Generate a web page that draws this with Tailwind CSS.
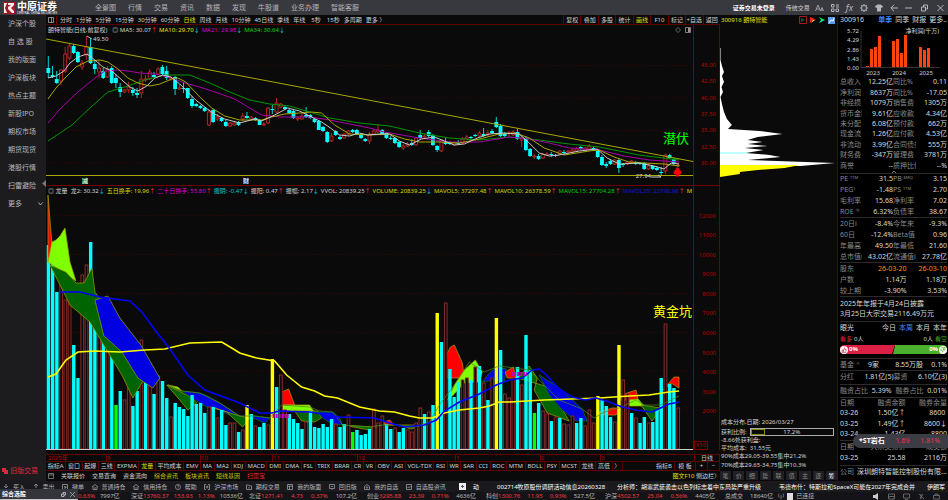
<!DOCTYPE html>
<html lang="zh-CN">
<head>
    <meta charset="UTF-8">
    <meta name="viewport" content="width=device-width, initial-scale=1.0">
    <title>中原证券 - 朗特智能 300916</title>
    <script src="https://cdn.jsdelivr.net/npm/@tailwindcss/browser@4"></script>
</head>
<body class="bg-[#0a0a0a] font-['Noto_Sans','Noto_Sans_CJK_SC',sans-serif] text-[6px] leading-[8px] text-[#d2d2d2] whitespace-nowrap overflow-hidden">
<div class="min-h-screen flex flex-col">

    <!-- Top bar -->
    <header class="h-[15px] shrink-0 bg-[#38383f] flex items-center text-[7px] text-[#b4b4ba]">
        <div class="w-[95px] pl-[3px] flex items-center gap-[2px]">
            <svg class="w-3 h-3" viewBox="0 0 12 12"><rect width="12" height="12" fill="#a31a26"/><path d="M1 11V1h3L2 6l2 5zM5 1h6v2L8 6l3 3v2H9L5 7V5l3-2H5z" fill="#eee"/></svg>
            <div class="text-white">
                <div class="text-[10px] leading-[10px] font-bold">中原证券</div>
                <div class="text-[3px] leading-[4px]">CENTRAL CHINA SECURITIES</div>
            </div>
        </div>
        <nav class="flex gap-3">
            <a href="#">全景图</a><a href="#">行情</a><a href="#">交易</a><a href="#">资讯</a><a href="#">数据</a><a href="#">发现</a><a href="#">牛股道</a><a href="#">业务办理</a><a href="#">智能客服</a>
        </nav>
        <div class="ml-auto flex items-center gap-[9px] pr-1 text-[6px]">
            <button class="font-bold text-white mr-[2px]">证券交易未登录</button>
            <button class="text-[#d0d0d4]">传统交易</button>
            <svg class="w-[9px] h-2 -ml-1" viewBox="0 0 9 8" fill="none" stroke="#b4b4ba" stroke-width=".8"><path d="M.5 7 3 1l2.500 6M1.500 5h3M5.500 7 7 3.500 8.500 7M6 6h2"/></svg>
            <svg class="w-2 h-2 -ml-[2px]" viewBox="0 0 8 8" fill="none" stroke="#b4b4ba"><path d="M.5.5h2.500v2.500H.5zM5 1h3M5 3h3M.5 5h2.500v2.500H.5zM5 5h2.500v2.500H5z"/></svg>
            <span class="italic text-[9px] -ml-[2px]">fx</span>
            <svg class="w-2 h-2 -ml-[2px]" viewBox="0 0 8 8" fill="none" stroke="#b4b4ba"><circle cx="4" cy="4" r="2.400"/><path d="M4 0v1.500M4 6.500V8M0 4h1.500M6.500 4H8M1.200 1.200l1 1M5.800 5.800l1 1M1.200 6.800l1-1M5.800 2.200l1-1" stroke-width="1.200"/></svg>
            <svg class="w-2 h-2 -ml-[2px]" viewBox="0 0 8 8" fill="#b4b4ba"><path d="M2.500.5h3L8 2.200 7 4l-1-.5v4H2v-4L1 4 0 2.200z"/></svg>
            <svg class="w-2 h-2 -ml-[2px]" viewBox="0 0 8 8" fill="none" stroke="#b4b4ba"><path d="M8 4H1M4 .8.8 4 4 7.200"/></svg>
            <svg class="w-[7px] h-2 -ml-[2px]" viewBox="0 0 7 8" fill="none" stroke="#b4b4ba"><path d="M0 4h7"/></svg>
            <svg class="w-[7px] h-2" viewBox="0 0 7 8" fill="none" stroke="#b4b4ba"><path d="M.5 3h4v4h-4zM2.500 3V1h4v4h-2"/></svg>
            <svg class="w-[7px] h-2" viewBox="0 0 7 8" fill="none" stroke="#b4b4ba"><path d="M.5 1l6 6M6.500 1l-6 6"/></svg>
        </div>
    </header>

    <main class="flex flex-1">

        <!-- Sidebar -->
        <aside class="w-[46px] shrink-0 bg-[#1c1c1f] flex flex-col relative text-[7px] text-[#b8b8bc]">
            <nav class="flex flex-col pl-2 [&>a]:h-[18px] [&>a]:flex [&>a]:items-center">
                <a href="#">沪深个股</a>
                <a href="#">自 选 股</a>
                <a href="#">我的版面</a>
                <a href="#">沪深板块</a>
                <a href="#">热点主题</a>
                <a href="#">新股IPO</a>
                <a href="#">期权市场</a>
                <a href="#">期货现货</a>
                <a href="#">港股行情</a>
                <a href="#">扫雷避险</a>
                <a href="#" class="justify-between pr-[3px]">更多
                    <svg class="w-[5px] h-1" viewBox="0 0 5 4" fill="none" stroke="#aaa"><path d="M.5.5l2 2.500 2-2.500"/></svg>
                </a>
            </nav>
            <svg class="absolute right-0 top-[165px] w-1 h-[7px]" viewBox="0 0 4 7" fill="#77777c"><path d="M4 0v7L0 3.500z"/></svg>
            <button class="mt-auto mb-[6px] flex items-center pl-[2px] gap-[2px] text-[#e0283c]">
                <svg class="w-[6px] h-[6px]" viewBox="0 0 6 6" fill="#e0283c"><path d="M0 0h4v2h2v4H2V4H0z"/></svg>旧版交易
            </button>
        </aside>

        <!-- Charts -->
        <section class="flex-1 min-w-0 flex flex-col">
            <div class="h-[10px] flex items-center border-b border-[#5a0000]">
                <svg class="w-[6px] h-[6px] mx-[2px]" viewBox="0 0 6 6" fill="none" stroke="#aaa" stroke-width=".8"><path d="M.5.5h5v5h-5zM3.500.5v5"/></svg>
                <div class="flex gap-1 border-l border-[#700000] pl-[3px]">
                    <button>分时</button><button>1分钟</button><button>5分钟</button><button>15分钟</button><button>30分钟</button><button>60分钟</button><button class="text-[#e0e000]">日线</button><button>周线</button><button>月线</button><button>10分钟</button><button>45日线</button><button>季线</button><button>年线</button><button class="ml-[2px]">5秒</button><button class="ml-[2px]">15秒</button><button>多周期</button><button>更多 〉</button>
                </div>
                <div class="ml-auto w-[157px] h-full grid grid-cols-9 [&>button]:border-l [&>button]:border-[#700000]">
                    <button>复权</button><button>叠加</button><button>多股</button><button>统计</button><button class="text-[#e0e000]">画线</button><button>F10</button><button>标记</button><button>+自选</button><button>返回</button>
                </div>
            </div>

            <div class="flex">
                <!-- Price chart -->
                <div class="flex-1 min-w-0 relative border-r border-[#800000]">
                    <div class="h-[10px] flex items-center gap-[5px] pl-[2px] [&_i]:inline-block [&_i]:w-[3px] [&_i]:not-italic">
                        <span>朗特智能(日线,前复权)</span>
                        <span>◎ MA5: 30.07<i class="text-[#f33]">↑</i></span>
                        <span class="text-[#e6e600]">MA10: 29.70<i class="text-cyan-400">↓</i></span>
                        <span class="text-[#d400d4]">MA21: 29.98<i class="text-cyan-400">↓</i></span>
                        <span class="text-[#00d800]">MA34: 30.64<i class="text-cyan-400">↓</i></span>
                        <span class="ml-auto flex gap-1 pr-[2px]">
                            <svg class="w-[6px] h-[6px]" viewBox="0 0 6 6" fill="none" stroke="#888" stroke-width=".7"><path d="M3 .5 5.500 3 3 5.500.5 3z"/></svg>
                            <svg class="w-[6px] h-[6px]" viewBox="0 0 6 6" fill="none" stroke="#999" stroke-width=".8"><path d="M.5.5h5v5h-5z"/><path d="M4 1v4" stroke-width="2"/></svg>
                        </span>
                    </div>
                    <svg id="price" class="block w-full h-[150px]" viewBox="46 35 648 150" preserveAspectRatio="none" fill="none"></svg>
                    <span class="absolute left-[47px] top-[10px]">49.50</span>
                    <span class="absolute right-[42px] top-[147px]">27.94</span>
                    <span class="absolute right-[4px] top-[105px] text-[13px] leading-4 text-[#00ff00]">潜伏</span>
                    <span class="absolute left-[36px] top-[153px] bg-[#157a24] text-white leading-[6px]">减</span>
                    <span class="absolute left-[197px] top-[153px] bg-[#1d4d80] text-white leading-[6px]">财</span>
                </div>
                <div class="w-[26px] pt-[32px] text-right pr-[3px] text-[#b80000] border-r border-[#700000]">
                    <div class="grid grid-rows-7 h-[114px] items-center">
                        <div>45.00</div><div>42.50</div><div>40.00</div><div>37.50</div><div>35.00</div><div>32.50</div><div>30.00</div>
                    </div>
                </div>
            </div>

            <div class="flex border-t border-[#700000]">
                <!-- Volume chart -->
                <div class="flex-1 min-w-0 relative border-r border-[#800000]">
                    <div class="h-[9px] flex items-center gap-[5px] pl-[2px] overflow-hidden [&>span]:shrink-0 [&_i]:inline-block [&_i]:w-[3px] [&_i]:not-italic">
                        <span>◎ 龙量&nbsp; 龙2: 30.32<i class="text-cyan-400">↓</i></span>
                        <span class="text-[#d8d800]">五日换手: 19.96<i class="text-[#f33]">↑</i></span>
                        <span class="text-[#d400d4]">二十日换手: 55.80<i class="text-[#f33]">↑</i></span>
                        <span class="text-[#00c8c8]">振阴: -0.47<i>↓</i></span>
                        <span>振阳: 0.47<i class="text-[#f33]">↑</i></span>
                        <span>振幅: 2.17<i class="text-cyan-400">↓</i></span>
                        <span>VVOL: 20839.25<i class="text-[#f33]">↑</i></span>
                        <span class="text-[#d8d800]">VOLUME: 20839.25<i class="text-cyan-400">↓</i></span>
                        <span class="text-[#d8d800]">MAVOL5: 37297.48<i class="text-[#f33]">↑</i></span>
                        <span class="text-[#d8d800]">MAVOL10: 26378.59<i class="text-[#f33]">↑</i></span>
                        <span class="text-[#00c800]">MAVOL15: 27704.28<i class="text-[#f33]">↑</i></span>
                        <span class="text-[#1414d8]">MAVOL25: 23798.98<i class="text-[#f33]">↑</i></span>
                        <span class="text-[#d8d800]">M</span>
                    </div>
                    <svg id="volume" class="block w-full h-[255px]" viewBox="46 195 648 255" preserveAspectRatio="none" fill="none"></svg>
                    <span class="absolute right-[1px] top-[117px] text-[13px] leading-4 text-[#ffff00]">黄金坑</span>
                </div>
                <div class="w-[26px] flex flex-col border-r border-[#700000] text-[#b80000] text-right">
                    <div class="grid grid-rows-11 h-[215px] mt-[20px] items-center pr-[3px]">
                        <div>12000</div><div>11000</div><div>10000</div><div>9000</div><div>8000</div><div>7000</div><div>6000</div><div>5000</div><div>4000</div><div>3000</div><div>2000</div>
                    </div>
                    <div class="mt-auto mr-[11px] border border-[#800000] leading-[7px] text-center">X10</div>
                </div>
            </div>

            <!-- Date axis -->
            <div class="mt-[4px] h-2 flex border-y border-[#600000] text-[#b80000] leading-[7px]">
                <div class="w-[60px] pl-[2px]">2025年</div>
                <div class="w-[94px] border-l border-[#700000]">9</div>
                <div class="w-[72px] border-l border-[#700000]">10</div>
                <div class="w-[85px] border-l border-[#700000]">11</div>
                <div class="w-[98px] border-l border-[#700000]">12</div>
                <div class="w-[85px] border-l border-[#700000]">1</div>
                <div class="w-[60px] border-l border-[#700000]">2</div>
                <div class="flex-1 border-l border-[#700000]">3</div>
                <div class="w-[26px] border-x border-[#700000] text-center text-[#c8c8c8]">日线</div>
            </div>

            <!-- Indicator tabs -->
            <div class="h-[9px] flex border-b border-[#600000] [&_button]:border-r [&_button]:border-[#600000] [&_button]:leading-[8px]">
                <div class="flex-1 flex mr-[31px] [&>button]:flex-auto">
                    <button>指标A</button><button>窗口</button><button>起爆</button><button>三线</button><button>EXPMA</button><button class="text-[#e0e000]">龙量</button><button>平均成本</button><button>EMV</button><button>MA</button><button>MA2</button><button>KDJ</button><button>MACD</button><button>DMI</button><button>DMA</button><button>FSL</button><button>TRIX</button><button>BRAR</button><button>CR</button><button>VR</button><button>OBV</button><button>ASI</button><button>VOL-TDX</button><button>RSI</button><button>WR</button><button>SAR</button><button>CCI</button><button>ROC</button><button>MTM</button><button>BOLL</button><button>PSY</button><button>MCST</button><button>龙线</button><button>高低</button><button>〉</button>
                </div>
                <button class="w-[21px]">指标B</button><button class="w-[21px]">模 板</button><button class="w-3">+</button><button class="w-3">−</button>
            </div>

            <div class="h-[10px] flex items-center gap-[7px] pl-[2px]">
                <svg class="w-[6px] h-[6px]" viewBox="0 0 6 6" fill="none" stroke="#888" stroke-width=".8"><path d="M.5.5h5v5h-5zM.5 2h5"/></svg>
                <a href="#">关联报价</a><a href="#">交易查询</a><a href="#">资金流向</a>
                <a href="#" class="text-[#c8c800]">综合资讯</a><a href="#" class="text-[#c8c800]">板块资讯</a><a href="#" class="text-[#c8c800]">短线基因</a>
                <a href="#" class="text-[#e02828]">扫雷宝</a>
                <a href="#" class="ml-auto"><span class="text-[#e0e000]">图文F10</span> 侧边栏〉</a>
            </div>
        </section>

        <!-- Chip distribution -->
        <section class="w-[118px] shrink-0 flex flex-col border-r border-[#5a0000]">
            <div class="h-[10px] flex items-center pl-[1px] pr-[2px] gap-[3px]">
                <span class="mr-auto text-[#e6e600]">300916 朗特智能</span>
                <svg class="w-2 h-2" viewBox="0 0 8 8" fill="none"><path d="M.5.5h7v7h-7z" stroke="#a02020"/><path d="M2 2l4 2-4 2z" fill="#0a5a28"/></svg>
                <svg class="w-[6px] h-[6px]" viewBox="0 0 6 6"><path d="M0 0l6 2.500-3 .5-3 3z" fill="#f22"/><path d="M1 6l2-3 2 0z" fill="#ff0"/></svg>
                <svg class="w-[6px] h-[6px]" viewBox="0 0 6 6"><path d="M0 0l6 3-6 3 2-3z" fill="#0e4"/><path d="M0 6l3-3 2 0z" fill="#0df"/></svg>
                <svg class="w-[7px] h-[7px]" viewBox="0 0 7 7"><path d="M0 0h7v7H0z" fill="#5c9bea"/><path d="M1 6l2-3 2 1 1-3" stroke="#fff" fill="none"/></svg>
            </div>
            <svg class="block w-full h-[393px]" viewBox="720 25 118 393" preserveAspectRatio="none">
                <path d="M720 48V166H801L836 163 748 160 781 157 770 155 746 153 764 150 745 148 768 146 748 144 763 142 748 140 758 137 783 134 760 131 728 129 732 125 727 119 724 112 722 104 720.500 97 723 92 721.500 87 724 82 722 76 724 72 722 66 720.500 60V48z" fill="#fff"/>
                <path d="M720 165H801L785 168 758 170 740 172V174L720 177z" fill="#ff0"/>
                <path d="M720 153h28" stroke="#7ff"/>
            </svg>
            <div class="pl-[1px]">
                <div class="h-[9px]">成本分布,日期: 2026/03/27</div>
                <div class="flex h-[9px] items-center gap-[3px] pr-[3px]">获利比例:
                    <div class="flex-1 h-2 border border-[#aaa] relative text-center leading-[7px]">17.2%<div class="absolute left-0 top-0 h-full w-[17%] border border-[#8a8a00]"></div></div>
                </div>
                <div>-8.66处获利盘:</div>
                <div>平均成本:&nbsp; 31.55元</div>
                <div class="h-[9px]">90%成本29.05-39.55集中21.2%</div>
                <div>70%成本29.65-34.75集中10.3%</div>
            </div>
            <div class="mt-[2px] h-[9px] grid grid-cols-9 gap-[2px] text-[#888] [&>button]:bg-[#202024]">
                <button>笔</button><button>价</button><button>细</button><button>势</button><button>联</button><button>值</button><button>主</button><button>逐</button><button class="text-white">筹</button>
            </div>
        </section>

        <!-- Quote panel -->
        <aside class="w-[110px] shrink-0 bg-black pl-[2px] pr-[1px] text-[7px] text-[#dadada] relative [&_hr]:border-[#2a2a2a] [&_th]:font-normal [&_th]:text-left [&_th]:text-[#8a8a8a] [&_th]:overflow-hidden [&_td]:text-right [&_table]:w-full [&_table]:table-fixed">
            <div class="h-[10px] flex items-center gap-[3px]">
                <span class="mr-auto">300916</span>
                <button class="text-[#3a8cff] font-bold">单季</button><button>同季</button><button>财报</button><button>更多..</button>
            </div>
            <svg class="block w-full h-[52px]" viewBox="840 25 107 52" fill="#d2d2d2" font-size="6" text-anchor="end">
                <text x="859" y="33">5.72</text><text x="859" y="42">4.29</text><text x="859" y="52">2.86</text><text x="859" y="61">1.43</text><text x="859" y="70">0.00</text>
                <text x="939" y="33">净利润(千万)</text>
                <g text-anchor="middle"><text x="873" y="75">2023</text><text x="899" y="75">2024</text><text x="926" y="75">2025</text></g>
                <path d="M861 31V67.500H940" fill="none" stroke="#333"/>
                <path d="M866 66h3v1h-3zM870 49h3v18h-3zM874 47h3v20h-3zM878 36h3v31h-3zM892 41h3v26h-3zM896 39h3v28h-3zM900 53h3v14h-3zM904 35h3v32h-3zM919 47h3v20h-3zM923 50h3v17h-3zM927 48h3v19h-3z" fill="#ff4310"/>
            </svg>

            <table class="h-[94px]">
                <colgroup><col class="w-[22px]"><col class="w-[31px]"><col class="w-[23px]"><col></colgroup>
                <tr><th>总收入</th><td>12.25亿</td><th>同比%</th><td>0.11</td></tr>
                <tr><th>净利润</th><td>8637万</td><th>同比%</th><td>-17.05</td></tr>
                <tr><th>非经损</th><td>1079万</td><th>销售费</th><td>1305万</td></tr>
                <tr><th>货币金额</th><td>9.61亿</td><th>应收款</th><td>4.34亿</td></tr>
                <tr><th>未分配</th><td>6.08亿</td><th>预付款</th><td>662万</td></tr>
                <tr><th>现金流</th><td>1.26亿</td><th>应付款</th><td>4.53亿</td></tr>
                <tr><th>非流动</th><td>3.99亿</td><th>合同债务</th><td>555万</td></tr>
                <tr><th>财务费</th><td>-347万</td><th>管理费</th><td>3781万</td></tr>
                <tr><th>商誉</th><td>--</td><th>质押比例</th><td>--%</td></tr>
            </table>
            <svg class="block mx-auto w-[4px] h-[2px]" viewBox="0 0 4 2" fill="none" stroke="#aaa" stroke-width=".7"><path d="M0 2l2-2 2 2"/></svg>
            <hr>
            <table class="h-[43px]">
                <colgroup><col class="w-[22px]"><col class="w-[31px]"><col class="w-[23px]"><col></colgroup>
                <tr><th>PE <sup class="text-[4px]">TTM</sup></th><td>31.5</td><th>PB <sup class="text-[4px]">MRQ</sup></th><td>3.15</td></tr>
                <tr><th>PEG<sup class="text-[4px]">1</sup></th><td>-1.48</td><th>PS <sup class="text-[4px]">TTM</sup></th><td>2.70</td></tr>
                <tr><th>毛利率</th><td>15.68</td><th>净利率</th><td>7.02</td></tr>
                <tr><th>ROE <sup class="text-[4px]">⑩</sup></th><td>6.32%</td><th>负债率</th><td>38.67</td></tr>
            </table>
            <hr>
            <table class="h-[43px] mt-[1px]">
                <colgroup><col class="w-[22px]"><col class="w-[31px]"><col class="w-[23px]"><col></colgroup>
                <tr><th>20日i</th><td>-8.4%</td><th>今年来</th><td>-9.3%</td></tr>
                <tr><th>60日</th><td>-12.4%</td><th>Beta值</th><td>0.96</td></tr>
                <tr><th>年最高</th><td>49.50</td><th>年最低</th><td>21.60</td></tr>
                <tr><th>总市值i</th><td>43.02亿</td><th>流通值i</th><td>27.78亿</td></tr>
            </table>
            <hr>
            <table class="h-[32px] mt-[1px]">
                <colgroup><col class="w-[26px]"><col><col></colgroup>
                <tr><th>股东</th><td class="text-[#ff8c1a]">26-03-20</td><td class="text-[#ff8c1a]">26-03-10</td></tr>
                <tr><th>户数</th><td>1.14万</td><td>1.18万</td></tr>
                <tr><th>较上期</th><td>-3.90%</td><td>3.53%</td></tr>
            </table>
            <hr>
            <div class="py-[2px] leading-[10px]">
                <div>2025年年报于4月24日披露</div>
                <div>3月25日大宗交易2116.49万元</div>
            </div>
            <hr>
            <div class="h-[12px] flex items-center gap-[3px]">
                <span class="mr-auto">眼光</span>
                <button>今日</button><button class="text-[#3a8cff]">本周</button><button>本月</button><button>本年</button>
            </div>
            <div class="h-[10px] flex items-center text-[6px] gap-[2px]">
                <span class="text-[#e0283c]">看多</span> 0人 <span class="ml-auto">0人</span> <span class="text-[#3fa72e]">看空</span>
            </div>
            <div class="h-[9px] mt-[1px] flex text-white font-bold text-[6px] leading-[9px]">
                <div class="flex-1 bg-[#dc1f45] rounded-l-full flex gap-[1px] items-center">
                    <svg class="w-2 h-2" viewBox="0 0 8 8"><circle cx="4" cy="4" r="4" fill="#fff"/><path d="M2 4h1v2.500H2zM3.500 6.500V4L4.500 1.800 5 3.500h1.200L5.700 6.500z" fill="none" stroke="#dc1f45" stroke-width=".6"/></svg>0%
                </div>
                <svg class="w-[3px] h-[9px]" viewBox="0 0 3 9"><path d="M0 0h3L0 9z" fill="#dc1f45"/><path d="M3 1v8H1z" fill="#4cb02e"/></svg>
                <div class="flex-1 bg-[#4cb02e] rounded-r-full flex gap-[1px] items-center justify-end">0%
                    <svg class="w-2 h-2" viewBox="0 0 8 8"><circle cx="4" cy="4" r="4" fill="#fff"/><path d="M6 4H5V1.500h1zM4.500 1.500V4L3.500 6.200 3 4.500H1.800L2.300 1.500z" fill="none" stroke="#4cb02e" stroke-width=".6"/></svg>
                </div>
            </div>
            <hr class="mt-1">
            <div class="h-[11px] flex items-center justify-between"><span class="text-[#8a8a8a]">基金 <sup class="text-[4px]">④</sup></span><span>9家</span><span class="ml-2">8.55万股</span><span>0.1%</span></div>
            <hr>
            <div class="h-[11px] flex items-center justify-between"><span class="text-[#8a8a8a]">分红</span><span class="ml-auto">1.81亿(5)</span><span class="text-[#8a8a8a]">募资</span><span class="ml-auto">6.10亿(3)</span></div>
            <hr class="mt-[2px]">
            <div class="h-[12px] flex items-center justify-between"><span class="text-[#8a8a8a]">融资占比</span><span>5.39%</span><span class="text-[#8a8a8a]">融券占比</span><span>0.01%</span></div>
            <hr>
            <table class="h-[41px]">
                <colgroup><col class="w-[24px]"><col><col></colgroup>
                <tr class="text-[#8a8a8a]"><td class="text-left!">日期</td><td>融资余额</td><td>融券余量</td></tr>
                <tr><td class="text-left!">03-26</td><td>1.50亿↑</td><td>8600&nbsp;</td></tr>
                <tr><td class="text-left!">03-25</td><td>1.49亿↑</td><td>8600↓</td></tr>
                <tr><td class="text-left!">03-24</td><td>1.43亿</td><td>8800</td></tr>
            </table>
            <hr class="mt-[1px]">
            <table class="h-[22px]">
                <colgroup><col class="w-[24px]"><col><col></colgroup>
                <tr class="text-[#8a8a8a]"><td class="text-left!">日期</td><td>大宗交易价</td><td>成交额</td></tr>
                <tr><td class="text-left!">03-25</td><td>25.58</td><td>2116万</td></tr>
            </table>
            <hr class="mt-[2px]">
            <div class="pt-[2px] flex gap-[3px]"><span class="text-[#8a8a8a]">公司</span>深圳朗特智能控制股份有限...</div>
            <div class="absolute left-[15px] right-0 bottom-[33px] h-[14px] rounded-l-full bg-[#3c3c44] flex items-center justify-between pl-[6px] pr-2">
                <b class="text-white">*ST岩石</b><span class="text-[#f03050]">1.69</span><span class="text-[#f03050]">1.81%</span>
            </div>
        </aside>
    </main>

    <!-- Tool bar and news ticker -->
    <footer class="shrink-0 relative bg-[#1a1a1e]">
        <div class="h-[11px] flex items-center pl-[3px] text-[#b4b4b8]">
            <div class="w-[443px] shrink-0 flex items-center justify-between [&>button]:flex [&>button]:items-center [&>button]:gap-1 [&_svg]:w-[6px] [&_svg]:h-[6px]">
                <button><svg viewBox="0 0 6 6" fill="none" stroke="#999" stroke-width=".8"><path d="M3 0v4M1 2l2 2 2-2M.5 5.500h5"/></svg>买入</button>
                <button><svg viewBox="0 0 6 6" fill="none" stroke="#999" stroke-width=".8"><path d="M3 4V0M1 2l2-2 2 2M.5 5.500h5"/></svg>卖出</button>
                <button><svg viewBox="0 0 6 6" fill="none" stroke="#999" stroke-width=".8"><path d="M.5.5h5v5h-5zM2 2l2 2M4 2v2H2"/></svg>撤单</button>
                <button><svg viewBox="0 0 6 6" fill="none" stroke="#999" stroke-width=".8"><path d="M0 3l3-2.500L6 3M1 2.500v3h4v-3M2 4h2"/></svg>普通持仓</button>
                <button><svg viewBox="0 0 6 6" fill="none" stroke="#999" stroke-width=".8"><path d="M0 3l3-2.500L6 3M1 2.500v3h4v-3M2 4h2"/></svg>信用持仓</button>
                <button><svg viewBox="0 0 6 6" fill="none" stroke="#999" stroke-width=".7"><circle cx="3" cy="3" r="2.600"/><path d="M2.200 2.200c.2-1 1.600-1 1.600 0S3 2.800 3 3.700M3 4.300v.5"/></svg>帮助</button>
                <button><svg viewBox="0 0 6 6" fill="none" stroke="#999" stroke-width=".8"><path d="M2 .5H.5v5H2M4 .5h1.500v5H4"/><circle cx="3" cy="3" r="1"/></svg>沪深市场</button>
                <button><svg viewBox="0 0 6 6" fill="none" stroke="#999" stroke-width=".8"><path d="M.5 1h2l.5.8h2.500v3.700h-5zM3 3v1.500"/></svg>期权交易</button>
                <button><svg viewBox="0 0 6 6" fill="none" stroke="#999" stroke-width=".8"><path d="M.5.5h5v5h-5zM.5 2.200h5M2.500 2.200v3.300"/></svg>我的版面</button>
                <button><svg viewBox="0 0 6 6" fill="none" stroke="#999" stroke-width=".8"><path d="M.5.5h5v4h-5zM2 6h2M2 2.500h2"/></svg>回旧版</button>
                <button><svg viewBox="0 0 6 6" fill="none" stroke="#999" stroke-width=".8"><path d="M.5 2.500 3 .5l2.500 2v3h-5z"/><circle cx="3" cy="3.500" r=".8"/></svg>我的自选</button>
                <button><svg viewBox="0 0 6 6" fill="none" stroke="#999" stroke-width=".8"><path d="M.5.5h5v5h-5zM1.500 4l1-1 1 .8 1-1.800"/></svg>自选股资讯</button>
            </div>
            <div class="flex-1 min-w-0 ml-[13px] overflow-hidden flex items-center text-white">
                <svg class="w-[7px] h-[7px] mr-[7px] shrink-0" viewBox="0 0 7 7"><rect width="7" height="7" fill="#eee"/><path d="M2 3.500h3M3.500 2v3" stroke="#555"/></svg>
                <span class="mr-[18px]">动</span>
                <span class="mr-3">002714牧原股份调研活动信息20260328</span>
                <span class="mr-[18px]">分析师：胡塞武装袭击以色列标志着中东局势严重升级</span>
                <span class="mr-3">韦德布什：特斯拉和SpaceX可能在2027年完成合并</span>
                <span>伊朗军</span>
            </div>
        </div>

        <div class="h-[8px] flex items-center bg-[#141418] text-[#b8b8bc] [&_b]:font-normal [&_b]:text-[#f03c3c]">
            <div class="ml-[78px] w-[53px] flex gap-[5px]"><b>0.63%</b><span>7997亿</span></div>
            <div class="w-[118px] pr-[6px] flex justify-between"><span>深证<b>13760.37</b></span><b>153.93</b><b>1.13%</b><span>10536亿</span></div>
            <div class="w-[118px] pr-[10px] flex justify-between"><span>北证<b>1271.41</b></span><b>4.73</b><b>0.37%</b><span>107.2亿</span></div>
            <div class="w-[119px] pr-[10px] flex justify-between"><span>创业<b>3295.88</b></span><b>23.39</b><b>0.71%</b><span>4636亿</span></div>
            <div class="w-[119px] pr-[10px] flex justify-between"><span>科创<b>1300.76</b></span><b>11.95</b><b>0.93%</b><span>527.5亿</span></div>
            <div class="w-[120px] pr-[10px] flex justify-between"><span>沪深<b>4502.57</b></span><b>25.04</b><b>0.56%</b><span>4405亿</span></div>
            <span>总成交</span><span class="ml-[7px]">18640亿</span>
            <svg class="w-[6px] h-[6px] ml-[5px]" viewBox="0 0 6 6" fill="none" stroke="#999" stroke-width=".7"><path d="M1 .5q-1 2 0 4M5 .5q1 2 0 4M3 2v4"/></svg>
            <span class="ml-[3px] mr-[3px] w-[6px] h-[7px] bg-[#ddd]"></span>
            <span>已连接</span>
            <div class="ml-auto mr-2 flex gap-2 [&>svg]:w-[7px] [&>svg]:h-[7px]">
                <svg viewBox="0 0 7 7" fill="#ccc"><path d="M0 2h2l3-2v7L2 5H0z"/></svg>
                <svg viewBox="0 0 7 7" fill="none" stroke="#777" stroke-width=".8"><path d="M.5 1h6v5h-6zM.5 3.500h6"/></svg>
                <svg viewBox="0 0 7 7" fill="none" stroke="#777" stroke-width=".8"><path d="M.5 1h6v4h-6zM2 6.500h3"/></svg>
                <svg viewBox="0 0 7 7" fill="none" stroke="#777" stroke-width=".8"><path d="M1 1l5 5M5 1 2 6M3 1v5"/></svg>
                <svg viewBox="0 0 7 7" fill="none" stroke="#777" stroke-width=".8"><path d="M.5 2.500h6v3.500h-6zM2 2.500V1h3v1.500"/></svg>
            </div>
        </div>

        <div class="absolute left-0 bottom-0 w-[78px] h-[11px] bg-[#34343c] border-b border-[#c8c8c8] flex items-center pl-[2px] pr-[3px] gap-1">
            <b class="mr-auto text-white">综合选股</b>
            <svg class="w-[5px] h-[5px]" viewBox="0 0 5 5" fill="none" stroke="#ccc" stroke-width=".8"><path d="M.5 2h2.500v2.500H.5zM2 2V.5h2.500V3H3"/></svg>
            <svg class="w-[5px] h-[5px]" viewBox="0 0 5 5" fill="none" stroke="#aaa" stroke-width=".8"><path d="M0 0l5 5M5 0 0 5"/></svg>
        </div>
    </footer>
</div>

<script>
    const START = 48.3;
    const STEP = 4.233;

    // Daily candles: direction, high, body top, body bottom, low
    const candles = `d56,68,73,78 d66,75,77,78 d71,79,83,84 u69,70,81,85 u47,54,71,73 u43,46,58,60 d44,46,53,54 d51,52,62,63 u60,63,67,70 u36,47,55,60
        d38,47,63,64 d60,64,69,74 u60,68,72,78 d68,71,78,79 u66,69,77,78 d66,68,83,84 d74,78,83,88 d83,87,92,97 u89,90,92,93 u82,87,90,93
        d87,90,93,96 d88,93,95,98 u71,79,93,98 u75,79,80,82 u69,72,79,80 d72,75,77,78 u67,69,74,75 d65,67,74,75 d66,71,78,80 u76,78,79,81
        d76,77,89,95 u85,88,89,90 d82,88,89,93 d88,88,98,99 d96,99,106,108 d103,104,106,107 d105,106,108,109 d107,108,111,112 u109,112,125,126 d109,110,122,123
        u114,117,119,121 d117,118,121,122 d120,122,126,127 u122,123,126,127 u121,123,125,126 d121,122,125,126 u113,116,119,121 d112,116,118,119 u116,117,119,120
        d117,118,120,121 d119,120,125,125 u122,124,125,126 u107,108,123,124 d105,109,110,114 u98,103,112,113 u103,104,107,108 d105,107,109,110 d109,110,113,114 d110,111,118,119
        u116,118,119,121 u113,116,119,120 d107,115,117,118 d114,115,118,119 d118,119,122,123 d120,121,130,130 d126,127,131,132 d131,132,142,143 u133,136,141,142 d130,131,135,136
        d135,137,139,140 u133,134,138,139 u130,131,134,135 d129,130,132,133 d129,130,134,135 d133,134,138,139 d138,139,141,142 u132,134,141,144 u129,131,134,135 u124,130,132,133
        d129,130,134,135 d132,133,138,139 d136,138,139,140 d137,138,143,144 d141,142,147,148 u144,146,148,150 u142,144,146,147 d139,143,145,146 u137,138,145,146 d130,135,138,139
        u134,136,137,139 d130,132,136,137 d134,135,145,146 d145,146,150,152 u139,140,151,152 d138,142,144,145 d141,143,144,145 u142,143,145,146 d140,143,144,145 u137,139,143,144
        u135,137,139,140 d136,137,138,139 d134,135,136,137 u131,133,136,137 d128,134,136,137 u130,133,135,136 d129,131,133,134 d117,122,127,128 d124,126,136,137 d132,134,136,137
        u131,133,134,136 u130,132,135,136 d129,132,139,140 u136,138,140,147 d136,138,150,151 d148,149,156,157 u154,156,157,159 d154,156,159,160 u153,154,158,159 u152,154,155,156
        d152,154,155,157 d154,155,156,157 u150,151,154,155 d150,152,153,154 u150,151,152,153 u149,150,152,153 u147,149,151,152 d146,147,149,150 u147,148,150,151 u144,146,149,150
        d147,148,150,151 d149,150,157,158 d155,157,165,166 d162,164,166,168 d159,161,164,165 u159,160,164,165 d159,160,168,173 d163,164,165,167 u161,162,164,165 u160,161,163,164
        d161,162,164,165 d162,163,164,165 d162,163,169,170 u164,166,169,170 d165,166,169,170 d166,168,170,171 d167,172,173,176 u154,155,171,174 d154,155,158,159 d158,159,164,165 u163,165,166,167`;

    // Daily volume: c down, r up, y volume spike, g shrinking volume; the number is the bar top
    const volumes = `c245 c256 c292 r281 r300 r293 c345 c378 r275 r265 c242 c300 r330 c300 r345 c355 g405 c391 r400 r388
        c406 c391 r340 c377 r365 c394 r376 c381 c398 r417 c403 c407 c409 c416 c395 c404 c403 c413 r407 c407
        r418 c410 c425 r423 r423 c432 r430 y405 c414 r426 c427 c423 r425 y359 c387 r375 r410 c414 c419
        c423 c429 r422 c411 c427 c428 c424 c427 c419 r424 c427 c424 r415 g432 c430 c435 c434 c429 r409 r423
        r416 c424 c429 r428 c432 c428 r430 r432 r423 r408 c414 r412 c405 y313 c342 r303 c369 c397 c382 r380
        r378 c380 r367 c366 r383 c400 r378 y318 c350 r394 r398 r378 c367 r385 c335 c370 g413 c403 r411 r414
        c421 r417 c418 r424 r425 r416 c423 c418 r426 r410 r423 y396 c400 c406 c417 r422 y345 r380 r394 c413
        r418 c423 c417 r423 c422 c410 c378 r324 c384 c388 r408`;

    const VOL_COLORS = { c: '#00ffff', r: '#8c2a2a', y: '#ffff00', g: '#00ff00' };

    const line = (points, color, width = 1) =>
        `<polyline points="${points}" stroke="${color}" stroke-width="${width}"/>`;
    const area = (points, color, edge = '#a0a000') =>
        `<polygon points="${points}" fill="${color}" stroke="${edge}" stroke-width=".7"/>`;
    const grid = (y) => `<path d="M46 ${y}H694" stroke="#5a0000" stroke-width=".7" stroke-dasharray="1 2"/>`;

    function drawPrice() {
        let out = [65.5, 98, 130.5, 163].map(grid).join('');
        candles.trim().split(/\s+/).forEach((c, i) => {
            const x = START + STEP * i;
            const [high, top, bottom, low] = c.slice(1).split(',').map(Number);
            if (c[0] === 'd') {
                out += `<path d="M${x} ${high}V${low}" stroke="#00d8d8"/><rect x="${x - 1.9}" y="${top}" width="3.8" height="${bottom - top}" fill="#00ffff"/>`;
            } else {
                out += `<path d="M${x} ${high}V${top}M${x} ${bottom}V${low}M${x - 1.5} ${top}h3v${bottom - top}h-3z" stroke="#c82828" stroke-width=".9"/>`;
            }
        });
        out += line('48,141 72,125 90,108 108,92 125,87 145,80 165,75 190,75 210,83 230,92 250,100 270,104 290,106 310,112 330,118 360,123 390,126 420,133 450,138 480,140 510,137 540,140 570,144 600,147 640,155 680,160', '#009600');
        out += line('48,123 62,107 78,92 95,78 105,71 118,70 128,71 140,73 155,74 172,78 185,83 200,87 215,92 235,99 250,108 262,115 280,117 310,117 330,120 345,123 370,128 385,132 420,138 450,142 480,142 510,137 530,139 550,143 570,148 600,150 625,156 650,160 680,162', '#a800a8');
        out += line('48,99 56,88 66,77 76,67 88,61 100,60 108,62 118,69 128,78 138,83 150,86 160,84 172,79 178,78 186,82 200,97 212,108 225,116 240,120 262,120 272,117 285,114 300,113 312,112 322,113 335,125 350,134 370,135 390,134 405,139 420,142 440,142 460,143 480,139 500,134 516,133 530,138 545,148 565,155 590,151 600,150 615,157 630,162 645,163 665,164 680,166', '#a8a800');
        out += line('48,78 56,76 64,71 70,63 78,57 87,54 95,60 103,67 112,71 122,80 130,87 138,91 147,86 155,78 163,75 171,77 180,84 188,92 196,100 205,107 213,113 225,119 240,123 255,119 262,121 275,115 288,108 300,111 312,117 322,122 331,128 340,135 350,136 360,133 368,135 380,134 390,134 400,141 410,145 422,139 435,137 445,141 455,145 465,144 478,138 490,134 505,133 520,134 530,143 540,153 550,156 560,155 580,151 598,149 608,158 620,164 640,163 655,166 665,169 672,163 680,164', '#c8c8c8');
        out += line('46,39 694,161.5', '#a8a800');
        out += line('46,175.5 694,175.5', '#a8a800');
        // High / low markers and buy signal
        out += line('87,36 92,39', '#bbb') + line('652,177 662,177 659,175', '#ccc');
        out += '<path d="M678.500 167l4 5q0 3-3 2.500l1 2h-4l1-2q-3 .5-3-2.500z" fill="#ff0000"/>';
        document.getElementById('price').innerHTML = out;
    }

    function drawVolume() {
        let out = [215.5, 254.5, 293.5, 332.5, 371, 410].map(grid).join('') + areas();
        volumes.trim().split(/\s+/).forEach((v, i) => {
            const x = START + STEP * i;
            const top = Number(v.slice(1));
            const color = VOL_COLORS[v[0]];
            out += v[0] === 'r'
                ? `<rect x="${x - 1.2}" y="${top}" width="2.700" height="${449 - top}" fill="#0a0a0a" stroke="${color}"/>`
                : `<rect x="${x - 1.6}" y="${top}" width="3.400" height="${449 - top}" fill="${color}"/>`;
        });
        out += leftAreas();
        out += line('168,385 175,388 182,391 200,393 220,403 240,416 255,416 270,418 282,405 310,407 320,411 333,412 343,425 370,427 383,425 397,425 412,428 430,422 440,405 455,385 470,362 485,372 500,366 515,368 530,370 546,386 560,400 583,409 595,418 605,412 620,408 637,400 645,405 662,405 680,396', '#4c8c20', .7);
        out += line('48,377 56,374 66,360 78,352 95,351 120,352 145,350 165,349 190,343 222,342 232,348 240,353 257,358 275,361 287,375 302,387 315,391 325,396 338,398 360,407 380,411 395,412 410,416 420,418 433,418 445,413 460,410 480,408 490,406 500,402 510,402 545,400 600,398 630,396 650,395 670,392 680,391', '#ffff00', 1.6);
        out += line('60,292 80,292 100,297 130,301 142,312 155,330 168,346 188,375 205,390 240,403 260,413 272,413 280,411 310,412 340,417 375,418 390,423 405,427 425,425 437,420 445,411 460,402 480,394 497,385 510,380 523,378 533,370 540,369 547,375 560,389 573,397 586,400 597,398 610,402 623,407 637,410 653,412 670,404 680,402', '#0000ff', 1.6);
        // Signal marks over the moving averages
        out += '<path d="M273 416h16M512 374h16" stroke="#c000c0" stroke-width="4" stroke-dasharray="2 1"/>';
        out += '<path d="M46 449.500H694" stroke="#ccc"/>';
        document.getElementById('volume').innerHTML = out;
    }

    function leftAreas() {
        return area('48,195 52,245 48,262', '#ff0000')
            + area('48,262 52,242 56,240 60,236 65,228 70,262 76,281 66,274', '#80ff00')
            + area('50,265 66,272 76,283 84,283 92,268 95,292 104,305 120,318 140,350 143,381 133,398 122,375 108,352 90,322 70,305', '#006400')
            + area('95,300 108,296 120,318 141,345 160,378 153,388 138,378 122,352 104,336', '#0000e0');
    }

    function areas() {
        return area('168,385 175,388 182,391 178,387', '#80ff00')
            + area('167,385 180,400 188,410 197,403 192,398 183,393', '#006400')
            + area('182,391 200,393 208,396 220,403 240,416 240,420 220,410 207,407 192,398', '#0000e0', '#008000')
            + area('212,407 227,412 243,427 250,418 240,416', '#006400')
            + area('247,415 265,423 270,418 255,416', '#0000e0', '#008000')
            + area('282,405 282,392 289,389 295,405', '#ff0000')
            + area('282,405 310,405 314,411 282,411', '#80ff00')
            + area('295,411 302,421 315,422 322,418 318,411', '#006400')
            + area('318,412 333,412 340,418 343,425 333,424 323,418', '#0000e0', '#008000')
            + area('343,425 370,430 383,425 373,427', '#006400')
            + area('385,422 390,420 395,425 385,425', '#ff0000')
            + area('397,425 412,429 423,425', '#006400')
            + area('447,378 447,355 451,347 455,345 463,363 465,378', '#ff0000')
            + area('448,400 455,385 465,370 476,360 483,372 480,382 465,383 453,396', '#80ff00')
            + area('483,382 490,373 497,367 507,369 505,382 495,380', '#0000e0', '#008000')
            + area('506,372 514,367 517,378 508,378', '#ff0000')
            + area('518,378 530,366 538,378 535,390 548,413 570,421 560,404 546,386', '#006400')
            + area('540,375 560,388 570,397 583,409 588,421 577,421 563,410 550,395', '#0000e0', '#008000')
            + area('600,412 613,408 620,408 617,415 600,415', '#ff0000')
            + area('622,395 637,390 639,400 622,400', '#ff0000')
            + area('630,400 639,399 645,406 630,406', '#80ff00')
            + area('642,405 653,421 662,408', '#006400')
            + area('664,390 675,377 680,377 680,388 672,383', '#ff0000');
    }

    drawPrice();
    drawVolume();
</script>
</body>
</html>
